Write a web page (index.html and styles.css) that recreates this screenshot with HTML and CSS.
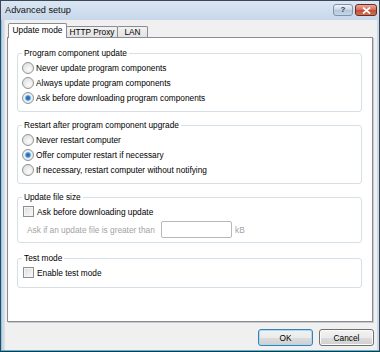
FILE: index.html
```html
<!DOCTYPE html>
<html lang="en">
<head>
  <meta charset="UTF-8">
  <title>Advanced setup</title>
  <link rel="stylesheet" href="styles.css">
</head>
<body>
  <div class="window">
    <div class="titlebar">
      <span class="title">Advanced setup</span>
      <div class="caption-btns">
        <span class="cbtn help">?</span>
        <span class="cbtn close">
          <svg width="9" height="7" viewBox="0 0 9 7">
            <path d="M1 0.5 L8 6.5 M8 0.5 L1 6.5" stroke="#fff" stroke-width="1.7" fill="none"/>
          </svg>
        </span>
      </div>
    </div>

    <div class="client">
      <!-- Вкладки -->
      <div class="tabs">
        <span class="tab active">Update mode</span>
        <span class="tab proxy">HTTP Proxy</span>
        <span class="tab lan">LAN</span>
      </div>

      <div class="panel">
        <fieldset class="group">
          <legend>Program component update</legend>
          <label class="opt"><span class="radio"></span>Never update program components</label>
          <label class="opt"><span class="radio"></span>Always update program components</label>
          <label class="opt"><span class="radio checked"></span>Ask before downloading program components</label>
        </fieldset>

        <fieldset class="group">
          <legend>Restart after program component upgrade</legend>
          <label class="opt"><span class="radio"></span>Never restart computer</label>
          <label class="opt"><span class="radio checked"></span>Offer computer restart if necessary</label>
          <label class="opt"><span class="radio"></span>If necessary, restart computer without notifying</label>
        </fieldset>

        <fieldset class="group size-group">
          <legend>Update file size</legend>
          <label class="opt"><span class="check"></span>Ask before downloading update</label>
          <div class="size-row">
            <span class="size-label">Ask if an update file is greater than</span>
            <span class="size-input"></span>
            <span class="unit">kB</span>
          </div>
        </fieldset>

        <fieldset class="group test-group">
          <legend>Test mode</legend>
          <label class="opt"><span class="check"></span>Enable test mode</label>
        </fieldset>
      </div>

      <div class="footer">
        <button class="btn default">OK</button>
        <button class="btn">Cancel</button>
      </div>
    </div>
  </div>
</body>
</html>
```

FILE: styles.css
```css
/* Основа */
body {
  margin: 0;
  font-family: "Liberation Sans", Arial, sans-serif;
  font-size: 8.3px;
  color: #000;
  background: #fff;
}
.window {
  width: 380px;
  height: 352px;
  box-sizing: border-box;
  border: 1px solid #3b4756;
  border-bottom-color: #26323e;
  background: #c9d8ea;
  padding: 0 2px 1px 3px;
  display: flex;
  flex-direction: column;
  box-shadow: inset 0 -1px 0 #43bde0, inset 1px 0 0 #7fcbe6;
}
/* Заголовок окна */
.titlebar {
  height: 19px;
  margin: 0 -2px 0 -3px;
  padding: 3px 2px 0 4px;
  box-sizing: border-box;
  display: flex;
  justify-content: space-between;
  align-items: flex-start;
  background: linear-gradient(#dbe6f3, #c7d7ea);
}
.title {
  font-size: 9.2px;
  line-height: 13px;
  color: #111;
}
.caption-btns {
  display: flex;
  gap: 2px;
}
.cbtn {
  height: 12px;
  box-sizing: border-box;
  border-radius: 3px;
  display: flex;
  align-items: center;
  justify-content: center;
}
.help {
  width: 20px;
  border: 1px solid #7f93aa;
  background: linear-gradient(#eef3f9, #c7d5e6 50%, #b3c5db 51%, #c6d6e9);
  color: #2c3d52;
  font-weight: bold;
  font-size: 8px;
  line-height: 10px;
}
.close {
  width: 22px;
  border: 1px solid #6e2a1d;
  background: linear-gradient(#e9a99a, #d36b55 50%, #c24a32 51%, #d0735c);
}
/* Клиентская область */
.client {
  flex: 1;
  background: #f0f0f0;
  padding: 3px 3px 0 3px;
  display: flex;
  flex-direction: column;
  box-shadow: inset 1px 0 0 #e0e0e0;
}
.tabs {
  display: flex;
  align-items: flex-end;
  height: 14px;
  margin-left: 1px;
  position: relative;
  z-index: 1;
}
.tab {
  height: 11px;
  box-sizing: border-box;
  border: 1px solid #898c95;
  border-bottom: none;
  border-radius: 2px 2px 0 0;
  background: linear-gradient(#f2f2f2, #e3e3e3);
  text-align: center;
  line-height: 10px;
}
.tab.active {
  height: 15px;
  width: 59px;
  margin-bottom: -1px;
  background: #fff;
  line-height: 13px;
  position: relative;
  z-index: 2;
}
.tab.proxy {
  width: 52px;
  margin-left: -1px;
}
.tab.lan {
  width: 31px;
  margin-left: -1px;
}
.panel {
  width: 366px;
  height: 285px;
  box-sizing: border-box;
  background: #fff;
  border: 1px solid #898c95;
  box-shadow: 1px 1px 0 #c9c9c9;
  padding: 9px 10px 0 9px;
  display: flex;
  flex-direction: column;
  gap: 7px;
}
/* Группы */
.group {
  margin: 0;
  min-width: 0;
  border: 1px solid #d5dfe5;
  border-radius: 3px;
  padding: 1px 4px 6px 4px;
}
.group legend {
  padding: 0 2px;
  line-height: 12px;
}
.size-group {
  padding-bottom: 4px;
  margin-bottom: 2px;
}
.test-group {
  padding-bottom: 7px;
}
.opt {
  display: flex;
  align-items: center;
  height: 15px;
}
.radio {
  width: 12px;
  height: 12px;
  box-sizing: border-box;
  border-radius: 50%;
  border: 1px solid #939393;
  background: radial-gradient(circle at 60% 65%, #fbfbfb, #d9d9d9);
  margin-right: 2px;
}
.radio.checked {
  background: radial-gradient(circle, #1f5ea8 0, #3f86cc 2px, #a9d4f2 3px, #e9f3fb 3.6px, #d9d9d9 100%);
}
.check {
  width: 11px;
  height: 11px;
  box-sizing: border-box;
  border: 1px solid #8f8f8f;
  background: linear-gradient(135deg, #dcdcdc, #fbfbfb);
  box-shadow: inset 0 0 0 1px #f4f4f4;
  margin: 0 3px 0 1px;
}
.size-row {
  display: flex;
  align-items: center;
  margin-top: 2px;
  padding-left: 5px;
  color: #a3a3a3;
}
.size-label {
  width: 134px;
}
.size-input {
  width: 71px;
  height: 17px;
  box-sizing: border-box;
  border: 1px solid #b8b8b8;
  border-radius: 2px;
  background: #fff;
}
.unit {
  margin-left: 3px;
}
/* Кнопки диалога */
.footer {
  display: flex;
  justify-content: flex-end;
  gap: 6px;
  margin-top: 7px;
}
.btn {
  width: 55px;
  height: 17px;
  padding: 0;
  font-family: inherit;
  font-size: 8.3px;
  color: #000;
  border: 1px solid #707070;
  border-radius: 3px;
  background: linear-gradient(#f2f2f2, #ebebeb 50%, #dddddd 51%, #cfcfcf);
  box-shadow: inset 0 0 0 1px #fbfbfb;
}
.btn.default {
  border-color: #3c7fb1;
  box-shadow: inset 0 0 0 1px #a8dcf6;
}
```
